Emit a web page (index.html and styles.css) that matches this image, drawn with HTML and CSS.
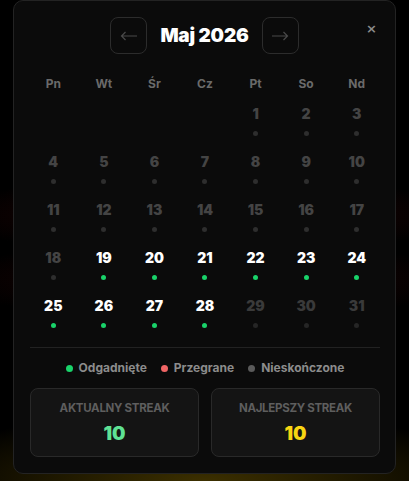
FILE: index.html
```html
<!DOCTYPE html>
<html lang="pl">
<head>
<meta charset="utf-8">
<title>Kalendarz</title>
<link rel="stylesheet" href="styles.css">
</head>
<body>
<div class="glow"></div>
<div class="card">
  <button class="close" aria-label="Zamknij">×</button>
  <div class="header">
    <button class="nav"><svg width="18" height="10" viewBox="0 0 18 10"><path d="M17 5H1.5M5.5 1L1.5 5l4 4" fill="none" stroke="#4a4a4a" stroke-width="1.2"/></svg></button>
    <div class="title">Maj 2026</div>
    <button class="nav"><svg width="18" height="10" viewBox="0 0 18 10"><path d="M1 5h15.5M12.5 1l4 4-4 4" fill="none" stroke="#4a4a4a" stroke-width="1.2"/></svg></button>
  </div>
  <div class="grid">
    <div class="wd">Pn</div><div class="wd">Wt</div><div class="wd">Śr</div><div class="wd">Cz</div><div class="wd">Pt</div><div class="wd">So</div><div class="wd">Nd</div>
    <div class="day empty"></div><div class="day empty"></div><div class="day empty"></div><div class="day empty"></div>
    <div class="day"><span class="n">1</span><span class="dot"></span></div>
    <div class="day"><span class="n">2</span><span class="dot"></span></div>
    <div class="day"><span class="n">3</span><span class="dot"></span></div>
    <div class="day"><span class="n">4</span><span class="dot"></span></div>
    <div class="day"><span class="n">5</span><span class="dot"></span></div>
    <div class="day"><span class="n">6</span><span class="dot"></span></div>
    <div class="day"><span class="n">7</span><span class="dot"></span></div>
    <div class="day"><span class="n">8</span><span class="dot"></span></div>
    <div class="day"><span class="n">9</span><span class="dot"></span></div>
    <div class="day"><span class="n">10</span><span class="dot"></span></div>
    <div class="day"><span class="n">11</span><span class="dot"></span></div>
    <div class="day"><span class="n">12</span><span class="dot"></span></div>
    <div class="day"><span class="n">13</span><span class="dot"></span></div>
    <div class="day"><span class="n">14</span><span class="dot"></span></div>
    <div class="day"><span class="n">15</span><span class="dot"></span></div>
    <div class="day"><span class="n">16</span><span class="dot"></span></div>
    <div class="day"><span class="n">17</span><span class="dot"></span></div>
    <div class="day"><span class="n">18</span><span class="dot"></span></div>
    <div class="day won"><span class="n">19</span><span class="dot"></span></div>
    <div class="day won"><span class="n">20</span><span class="dot"></span></div>
    <div class="day won"><span class="n">21</span><span class="dot"></span></div>
    <div class="day won"><span class="n">22</span><span class="dot"></span></div>
    <div class="day won"><span class="n">23</span><span class="dot"></span></div>
    <div class="day won"><span class="n">24</span><span class="dot"></span></div>
    <div class="day won"><span class="n">25</span><span class="dot"></span></div>
    <div class="day won"><span class="n">26</span><span class="dot"></span></div>
    <div class="day won"><span class="n">27</span><span class="dot"></span></div>
    <div class="day won"><span class="n">28</span><span class="dot"></span></div>
    <div class="day future"><span class="n">29</span><span class="dot"></span></div>
    <div class="day future"><span class="n">30</span><span class="dot"></span></div>
    <div class="day future"><span class="n">31</span><span class="dot"></span></div>
  </div>
  <div class="divider"></div>
  <div class="legend">
    <span class="item"><span class="ldot green"></span>Odgadnięte</span>
    <span class="item"><span class="ldot red"></span>Przegrane</span>
    <span class="item"><span class="ldot gray"></span>Nieskończone</span>
  </div>
  <div class="stats">
    <div class="stat"><div class="label">Aktualny streak</div><div class="value green">10</div></div>
    <div class="stat"><div class="label">Najlepszy streak</div><div class="value yellow">10</div></div>
  </div>
</div>
</body>
</html>
```
FILE: styles.css
```css
html, body {
  margin: 0;
  padding: 0;
}
body {
  width: 409px;
  height: 481px;
  overflow: hidden;
  background: #000;
  font-family: Inter, "Liberation Sans", sans-serif;
  position: relative;
}
.glow {
  position: absolute;
  left: 0;
  top: 0;
  width: 409px;
  height: 481px;
  background:
    radial-gradient(ellipse 260px 40px at 50% 215px, rgba(110, 10, 10, 0.35), rgba(0, 0, 0, 0) 100%),
    radial-gradient(ellipse 260px 40px at 50% 280px, rgba(110, 10, 10, 0.3), rgba(0, 0, 0, 0) 100%),
    radial-gradient(ellipse 300px 70px at 50% 481px, rgba(120, 95, 0, 0.5), rgba(0, 0, 0, 0) 100%);
}
.card {
  position: relative;
  box-sizing: border-box;
  margin-left: 13px;
  width: 383px;
  height: 474px;
  background: #0b0b0b;
  border: 1px solid #232323;
  border-radius: 10px;
  padding: 16px 15px 0 16px;
}
.close {
  position: absolute;
  top: 20px;
  right: 18px;
  background: none;
  border: 0;
  padding: 0;
  color: #8a8a8a;
  font-family: "DejaVu Sans", sans-serif;
  font-size: 13px;
  line-height: 16px;
  font-weight: 700;
  cursor: pointer;
}
.header {
  display: flex;
  justify-content: center;
  align-items: center;
  gap: 13px;
  height: 37px;
  margin-right: 1px;
}
.nav {
  box-sizing: border-box;
  width: 37px;
  height: 37px;
  border: 1px solid #2c2c2c;
  border-radius: 8px;
  background: #0b0b0b;
  display: flex;
  align-items: center;
  justify-content: center;
  padding: 0;
}
.title {
  color: #fff;
  font-size: 19px;
  font-weight: 900;
  letter-spacing: -0.2px;
  min-width: 88px;
  text-align: center;
}
.grid {
  display: grid;
  grid-template-columns: repeat(7, 1fr);
  margin: 20px -2px 0 -2px;
}
.wd {
  text-align: center;
  color: #6a6a6a;
  font-size: 12px;
  font-weight: 700;
  height: 20px;
  line-height: 20px;
}
.day {
  height: 48px;
  box-sizing: border-box;
  padding-top: 12px;
  display: flex;
  flex-direction: column;
  align-items: center;
}
.n {
  font-size: 14px;
  font-weight: 900;
  line-height: 16px;
  color: #444;
}
.dot {
  width: 5px;
  height: 5px;
  border-radius: 50%;
  background: #2e2e2e;
  margin-top: 9px;
}
.day.won .n { color: #fff; }
.day.won .dot { background: #19d36a; }
.day.future .n { color: #3a3a3a; }
.day.future .dot { background: #262626; }
.divider {
  height: 1px;
  background: #222;
  margin-top: 13px;
}
.legend {
  display: flex;
  justify-content: center;
  gap: 14px;
  margin-top: 12px;
  height: 16px;
  line-height: 16px;
  font-size: 12px;
  font-weight: 700;
  color: #8c8c8c;
}
.item {
  display: flex;
  align-items: center;
  gap: 6px;
}
.ldot {
  width: 7px;
  height: 7px;
  border-radius: 50%;
}
.ldot.green { background: #19d36a; }
.ldot.red { background: #f06565; }
.ldot.gray { background: #5a5a5a; }
.stats {
  display: grid;
  grid-template-columns: 1fr 1fr;
  gap: 12px;
  margin-top: 12px;
}
.stat {
  box-sizing: border-box;
  height: 69px;
  background: #141414;
  border: 1px solid #292929;
  border-radius: 8px;
  padding-top: 13px;
  display: flex;
  flex-direction: column;
  align-items: center;
  gap: 10px;
}
.label {
  text-transform: uppercase;
  font-size: 11.5px;
  font-weight: 700;
  line-height: 12px;
  color: #5e5e5e;
  letter-spacing: -0.3px;
}
.value {
  font-size: 19px;
  font-weight: 900;
  line-height: 20px;
}
.value.green { color: #5fe294; }
.value.yellow { color: #f8d512; }
```
